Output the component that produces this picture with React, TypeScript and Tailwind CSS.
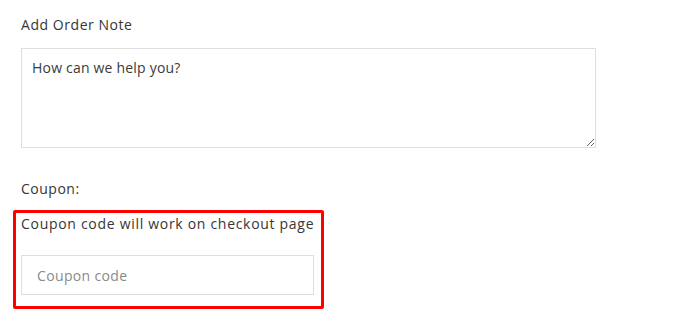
import React from "react";

export default function App() {
  return (
    <div
      className="w-[700px] h-[323px] bg-white pl-[21px] pt-[15px] text-[14px] leading-[20px] tracking-[0.7px] text-[#363636]"
      style={{ fontFamily: '"Open Sans", "Liberation Sans", sans-serif' }}
    >
      <p className="tracking-[0.55px]">Add Order Note</p>
      <textarea
        className="mt-[13px] block w-[575px] h-[100px] border border-[#dedede] px-[10px] py-[9px] text-[14px] leading-[20px] tracking-[0.2px] outline-none placeholder:text-[#3a3a3a]"
        placeholder="How can we help you?"
      />
      <p className="mt-[31px] tracking-[0.5px]">Coupon:</p>
      <div className="ml-[-8px] mt-[11px] w-[311px] border-[3px] border-[#ff0000] rounded-[2px] pl-[5px] pt-[1px] pb-[11px]">
        <p>Coupon code will work on checkout page</p>
        <input
          className="mt-[21px] block w-[293px] h-[40px] border border-[#dedede] px-[15px] text-[14px] tracking-[0.35px] outline-none placeholder:text-[#8a8a8a]"
          placeholder="Coupon code"
        />
      </div>
    </div>
  );
}
